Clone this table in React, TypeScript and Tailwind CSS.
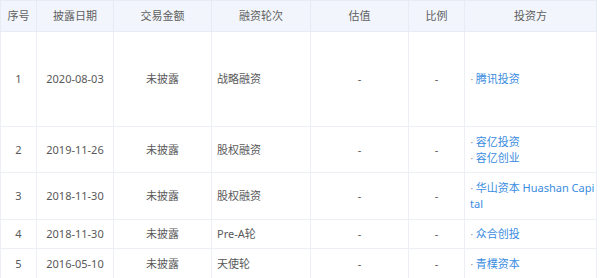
const rows = [
  { no: 1, date: "2020-08-03", amount: "未披露", round: "战略融资", h: "h-[95px]", investors: ["腾讯投资"] },
  { no: 2, date: "2019-11-26", amount: "未披露", round: "股权融资", h: "h-[46px]", investors: ["容亿投资", "容亿创业"] },
  { no: 3, date: "2018-11-30", amount: "未披露", round: "股权融资", h: "h-[47px]", investors: ["华山资本 Huashan Capital"] },
  { no: 4, date: "2018-11-30", amount: "未披露", round: "Pre-A轮", h: "h-[29px]", investors: ["众合创投"] },
  { no: 5, date: "2016-05-10", amount: "未披露", round: "天使轮", h: "h-[30px]", investors: ["青樸资本"] },
];

const headers = ["序号", "披露日期", "交易金额", "融资轮次", "估值", "比例", "投资方"];

export default function App() {
  return (
    <div className="w-[600px] h-[278px] overflow-hidden bg-white font-['Noto_Sans','Noto_Sans_CJK_SC',sans-serif] text-[11px] leading-[16px] text-[#595959]">
      <table className="w-[596px] table-fixed border-collapse">
        <colgroup>
          <col className="w-[36px]" />
          <col className="w-[77px]" />
          <col className="w-[98px]" />
          <col className="w-[99px]" />
          <col className="w-[98px]" />
          <col className="w-[56px]" />
          <col className="w-[132px]" />
        </colgroup>
        <thead>
          <tr className="h-[31px] bg-[#f2f6fc]">
            {headers.map((t) => (
              <th key={t} className="border border-[#e6ecf3] font-normal text-center text-[#5f5f5f] p-0">
                {t}
              </th>
            ))}
          </tr>
        </thead>
        <tbody>
          {rows.map((r) => (
            <tr key={r.no} className={r.h}>
              <td className="border border-[#eceff3] text-center p-0">{r.no}</td>
              <td className="border border-[#eceff3] text-center p-0">{r.date}</td>
              <td className="border border-[#eceff3] text-center p-0">{r.amount}</td>
              <td className="border border-[#eceff3] text-left px-[5px]">{r.round}</td>
              <td className="border border-[#eceff3] text-center p-0">-</td>
              <td className="border border-[#eceff3] text-center p-0">-</td>
              <td className="border border-[#eceff3] text-left pl-[5px] pr-0 py-0">
                {r.investors.map((inv) => (
                  <div key={inv} className="break-all">
                    <span className="font-['Liberation_Sans',sans-serif] text-[#8a8a8a] mr-[2px]">·</span>
                    <span className="text-[#3b8ce0]">{inv}</span>
                  </div>
                ))}
              </td>
            </tr>
          ))}
        </tbody>
      </table>
    </div>
  );
}
